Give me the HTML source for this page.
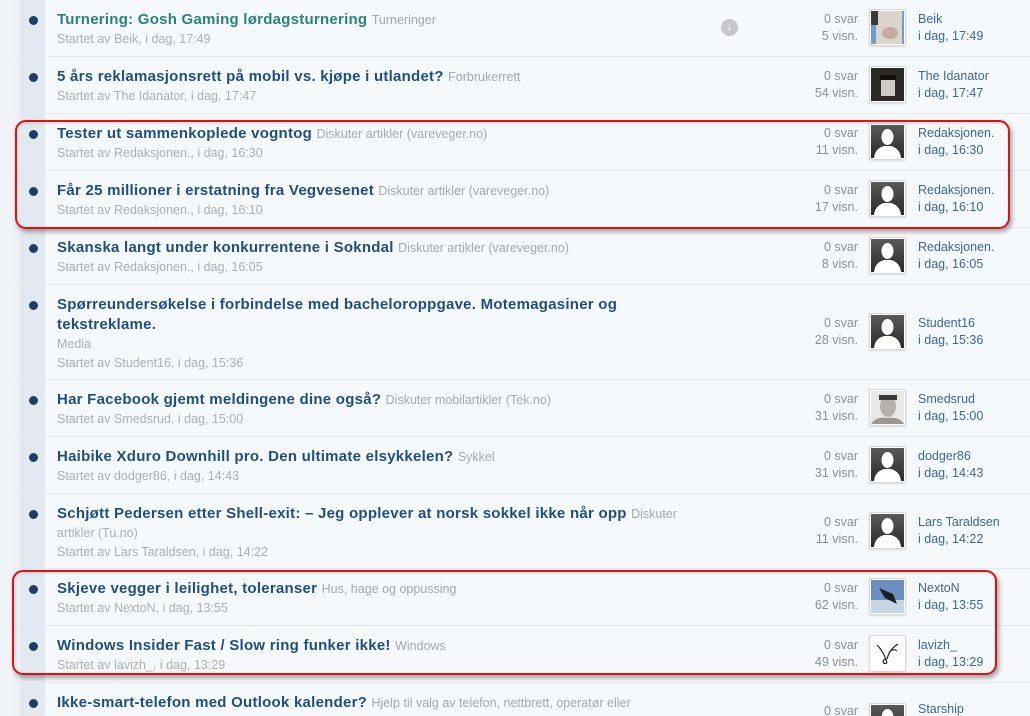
<!DOCTYPE html>
<html style="overflow:hidden;width:1030px;height:716px"><head><meta charset="utf-8"><style>
*{margin:0;padding:0;box-sizing:border-box}
body{width:1030px;height:716px;overflow:hidden;background:#f6f9fb;font-family:"Liberation Sans",Arial,sans-serif;position:relative}
.outer{position:absolute;left:0;top:0;width:13px;height:716px;background:#f1f4f7}
.strip{position:absolute;left:13px;top:0;width:7px;height:716px;background:#edf1f5}
.col{position:absolute;left:20px;top:0;width:25px;height:716px;background:#e3e9f0}
.row{position:absolute;left:13px;right:0;border-top:1px solid #e4e9ee;overflow:hidden}
.dot{position:absolute;left:16px;top:16px;width:9px;height:9px;border-radius:50%;background:#1d3f66}
.main{position:absolute;left:44px;top:10px;width:630px}
.t{font-size:15px;font-weight:bold;color:#1f4f7c;line-height:20px;letter-spacing:0.25px}
.t .f{font-weight:normal;font-size:12.5px;color:#a2a9b0;letter-spacing:0}
.m{font-size:12.5px;color:#a9b0b7;line-height:19px}
.st{position:absolute;right:172px;top:0;bottom:0;display:flex;flex-direction:column;justify-content:center;text-align:right;font-size:12.5px;line-height:17px;color:#8b9096}
.av{position:absolute;left:856px;top:50%;margin-top:-19px;width:37px;height:37px;border:1px solid #d6d9dc;background:#fff;padding:1px;box-shadow:0 1px 2px rgba(0,0,0,.12)}
.av svg{display:block;width:33px;height:33px}
.lp{position:absolute;left:905px;top:0;bottom:0;display:flex;flex-direction:column;justify-content:center;font-size:12.5px;line-height:17px;color:#3b6894}
.box{position:absolute;border:2px solid #d81414;border-radius:11px;box-shadow:2px 3px 5px rgba(0,0,0,.35), inset 1px 1px 3px rgba(0,0,0,.15)}
</style></head><body>
<div class="outer"></div><div class="strip"></div><div class="col"></div>

<svg width="0" height="0" style="position:absolute"><defs>
<linearGradient id="g" x1="0" y1="0" x2="0" y2="1"><stop offset="0" stop-color="#5a5a5a"/><stop offset="1" stop-color="#2a2a2a"/></linearGradient>
<symbol id="p" viewBox="0 0 33 33"><rect width="33" height="33" fill="url(#g)"/><ellipse cx="16.5" cy="12" rx="6" ry="8" fill="#fff"/><path d="M3 33 C4 24 10 22 13 21 L20 21 C23 22 29 24 30 33 Z" fill="#fff"/></symbol>
</defs></svg>

<div class="row" style="top:-1px;height:57px"><div class="dot"></div>
<div class="main"><div class="t" style="color:#2a8280">Turnering: Gosh Gaming lørdagsturnering <span class="f">Turneringer</span></div><div class="m">Startet av Beik, i dag, 17:49</div></div>
<div style="position:absolute;left:708px;top:19px;width:17px;height:17px;border-radius:50%;background:#c5c7c9;color:#fff;font-size:11px;line-height:17px;text-align:center;font-weight:bold">↓</div>
<div class="st"><div>0 svar</div><div>5 visn.</div></div>
<div class="av"><svg viewBox="0 0 33 33"><rect width="33" height="33" fill="#6d9ccf"/><rect x="5" y="0" width="26" height="33" fill="#d9d5cc"/><ellipse cx="19" cy="22" rx="8" ry="6" fill="#c9a9a0"/><rect x="0" y="0" width="7" height="14" fill="#3c3a36"/></svg></div>
<div class="lp"><div>Beik</div><div>i dag, 17:49</div></div></div>

<div class="row" style="top:56px;height:57px"><div class="dot"></div>
<div class="main"><div class="t">5 års reklamasjonsrett på mobil vs. kjøpe i utlandet? <span class="f">Forbrukerrett</span></div><div class="m">Startet av The Idanator, i dag, 17:47</div></div>
<div class="st"><div>0 svar</div><div>54 visn.</div></div>
<div class="av"><svg viewBox="0 0 33 33"><rect width="33" height="33" fill="#2a2824"/><rect x="10" y="10" width="14" height="18" fill="#cfcac2"/><rect x="9" y="7" width="16" height="5" fill="#111"/></svg></div>
<div class="lp"><div>The Idanator</div><div>i dag, 17:47</div></div></div>

<div class="row" style="top:113px;height:57px"><div class="dot"></div>
<div class="main"><div class="t">Tester ut sammenkoplede vogntog <span class="f">Diskuter artikler (vareveger.no)</span></div><div class="m">Startet av Redaksjonen., i dag, 16:30</div></div>
<div class="st"><div>0 svar</div><div>11 visn.</div></div>
<div class="av"><svg><use href="#p"/></svg></div>
<div class="lp"><div>Redaksjonen.</div><div>i dag, 16:30</div></div></div>

<div class="row" style="top:170px;height:57px"><div class="dot"></div>
<div class="main"><div class="t">Får 25 millioner i erstatning fra Vegvesenet <span class="f">Diskuter artikler (vareveger.no)</span></div><div class="m">Startet av Redaksjonen., i dag, 16:10</div></div>
<div class="st"><div>0 svar</div><div>17 visn.</div></div>
<div class="av"><svg><use href="#p"/></svg></div>
<div class="lp"><div>Redaksjonen.</div><div>i dag, 16:10</div></div></div>

<div class="row" style="top:227px;height:57px"><div class="dot"></div>
<div class="main"><div class="t">Skanska langt under konkurrentene i Sokndal <span class="f">Diskuter artikler (vareveger.no)</span></div><div class="m">Startet av Redaksjonen., i dag, 16:05</div></div>
<div class="st"><div>0 svar</div><div>8 visn.</div></div>
<div class="av"><svg><use href="#p"/></svg></div>
<div class="lp"><div>Redaksjonen.</div><div>i dag, 16:05</div></div></div>

<div class="row" style="top:284px;height:95px"><div class="dot"></div>
<div class="main"><div class="t">Spørreundersøkelse i forbindelse med bacheloroppgave. Motemagasiner og<br>tekstreklame.</div><div class="m">Media</div><div class="m">Startet av Student16, i dag, 15:36</div></div>
<div class="st"><div>0 svar</div><div>28 visn.</div></div>
<div class="av"><svg><use href="#p"/></svg></div>
<div class="lp"><div>Student16</div><div>i dag, 15:36</div></div></div>

<div class="row" style="top:379px;height:57px"><div class="dot"></div>
<div class="main"><div class="t">Har Facebook gjemt meldingene dine også? <span class="f">Diskuter mobilartikler (Tek.no)</span></div><div class="m">Startet av Smedsrud, i dag, 15:00</div></div>
<div class="st"><div>0 svar</div><div>31 visn.</div></div>
<div class="av"><svg viewBox="0 0 33 33"><rect width="33" height="33" fill="#e8e8e8"/><ellipse cx="17" cy="15" rx="8" ry="11" fill="#b5b2ae"/><rect x="8" y="4" width="18" height="5" fill="#3a3835"/><path d="M0 33 C4 27 10 26 17 27 C24 26 30 28 33 33Z" fill="#9a9894"/></svg></div>
<div class="lp"><div>Smedsrud</div><div>i dag, 15:00</div></div></div>

<div class="row" style="top:436px;height:57px"><div class="dot"></div>
<div class="main"><div class="t">Haibike Xduro Downhill pro. Den ultimate elsykkelen? <span class="f">Sykkel</span></div><div class="m">Startet av dodger86, i dag, 14:43</div></div>
<div class="st"><div>0 svar</div><div>31 visn.</div></div>
<div class="av"><svg><use href="#p"/></svg></div>
<div class="lp"><div>dodger86</div><div>i dag, 14:43</div></div></div>

<div class="row" style="top:493px;height:75px"><div class="dot"></div>
<div class="main"><div class="t">Schjøtt Pedersen etter Shell-exit: – Jeg opplever at norsk sokkel ikke når opp <span class="f">Diskuter</span></div><div class="m">artikler (Tu.no)</div><div class="m">Startet av Lars Taraldsen, i dag, 14:22</div></div>
<div class="st"><div>0 svar</div><div>11 visn.</div></div>
<div class="av"><svg><use href="#p"/></svg></div>
<div class="lp"><div>Lars Taraldsen</div><div>i dag, 14:22</div></div></div>

<div class="row" style="top:568px;height:57px"><div class="dot"></div>
<div class="main"><div class="t">Skjeve vegger i leilighet, toleranser <span class="f">Hus, hage og oppussing</span></div><div class="m">Startet av NextoN, i dag, 13:55</div></div>
<div class="st"><div>0 svar</div><div>62 visn.</div></div>
<div class="av"><svg viewBox="0 0 33 33"><rect width="33" height="33" fill="#6b8fbf"/><rect y="20" width="33" height="13" fill="#c8d4e2"/><path d="M8 8 L22 14 L26 24 L14 18Z" fill="#1a1e22"/></svg></div>
<div class="lp"><div>NextoN</div><div>i dag, 13:55</div></div></div>

<div class="row" style="top:625px;height:57px"><div class="dot"></div>
<div class="main"><div class="t">Windows Insider Fast / Slow ring funker ikke! <span class="f">Windows</span></div><div class="m">Startet av lavizh_, i dag, 13:29</div></div>
<div class="st"><div>0 svar</div><div>49 visn.</div></div>
<div class="av"><svg viewBox="0 0 33 33"><rect width="33" height="33" fill="#fff"/><path d="M6 8 C10 12 14 18 16 26 M16 26 C12 28 11 24 14 22 M16 22 C18 14 22 10 27 7 M18 16 C20 12 24 12 26 14" stroke="#222" stroke-width="1.2" fill="none"/></svg></div>
<div class="lp"><div>lavizh_</div><div>i dag, 13:29</div></div></div>

<div class="row" style="top:682px;height:34px"><div class="dot"></div>
<div class="main"><div class="t">Ikke-smart-telefon med Outlook kalender? <span class="f">Hjelp til valg av telefon, nettbrett, operatør eller</span></div><div class="m">leverandør</div></div>
<div class="st" style="top:20px;bottom:auto"><div>0 svar</div></div>
<div class="av" style="top:20px;margin-top:0"><svg><use href="#p"/></svg></div>
<div class="lp" style="top:18px;bottom:auto"><div>Starship</div></div></div>

<div class="box" style="left:15px;top:120px;width:995px;height:109px"></div>
<div class="box" style="left:12px;top:570px;width:985px;height:105px"></div>
</body></html>
